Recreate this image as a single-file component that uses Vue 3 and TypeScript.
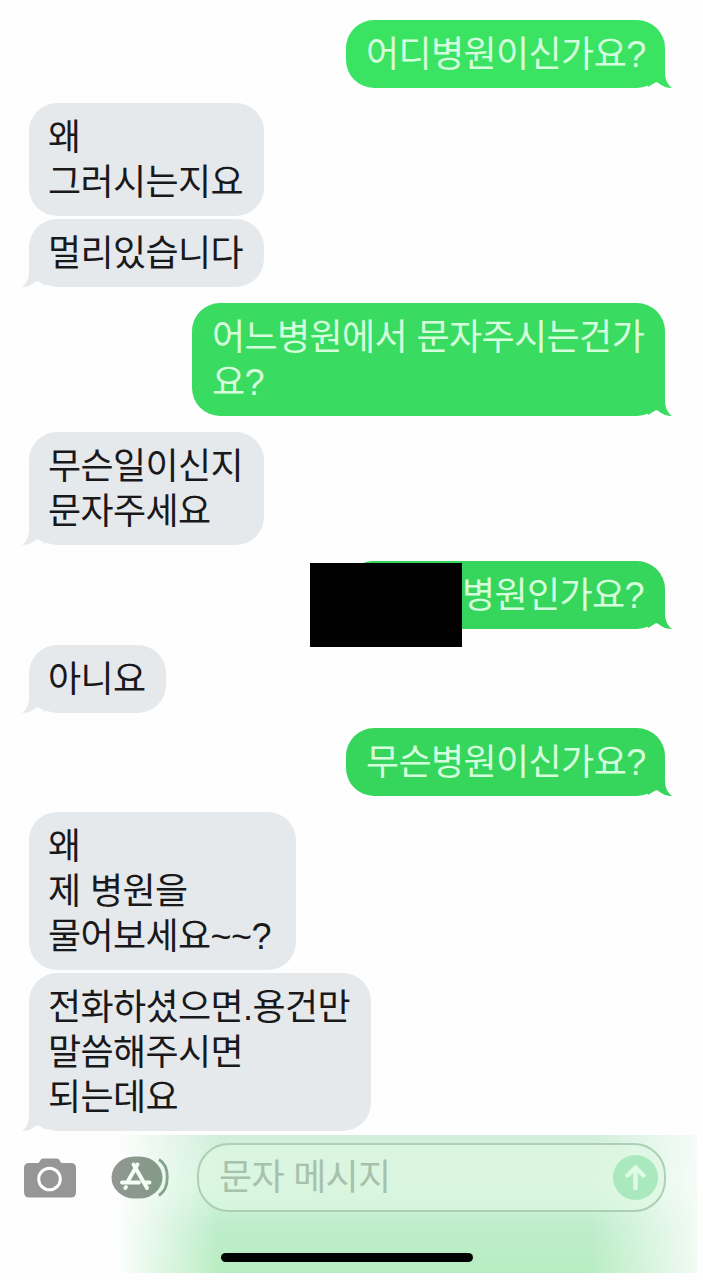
<script setup lang="ts">
interface Message {
  side: 'in' | 'out'
  lines: string[]
  width: number
  gap: number
  tail: boolean
  masked?: boolean
  tone?: string
}

const messages: Message[] = [
  { side: 'out', lines: ['어디병원이신가요?'], width: 319, gap: 0, tail: true, tone: 'bright' },
  { side: 'in', lines: ['왜', '그러시는지요'], width: 235, gap: 15, tail: false },
  { side: 'in', lines: ['멀리있습니다'], width: 235, gap: 3, tail: true },
  { side: 'out', lines: ['어느병원에서 문자주시는건가', '요?'], width: 473, gap: 16, tail: true, tone: 'mid' },
  { side: 'in', lines: ['무슨일이신지', '문자주세요'], width: 235, gap: 16, tail: true },
  { side: 'out', lines: ['병원인가요?'], width: 320, gap: 16, tail: true, masked: true },
  { side: 'in', lines: ['아니요'], width: 137, gap: 16, tail: true },
  { side: 'out', lines: ['무슨병원이신가요?'], width: 319, gap: 15, tail: true },
  { side: 'in', lines: ['왜', '제 병원을', '물어보세요~~?'], width: 267, gap: 16, tail: false },
  { side: 'in', lines: ['전화하셨으면.용건만', '말씀해주시면', '되는데요'], width: 342, gap: 3, tail: true },
]
</script>

<template>
  <main class="screen">
    <section class="thread">
      <div
        v-for="(m, i) in messages"
        :key="i"
        class="row"
        :class="m.side"
        :style="{ marginTop: m.gap + 'px' }"
      >
        <div class="bubble" :class="[m.tone, { masked: m.masked }]" :style="{ width: m.width + 'px' }">
          <p v-for="(line, n) in m.lines" :key="n" class="line">{{ line }}</p>
          <svg v-if="m.tail" class="tail" width="26" height="28" viewBox="0 0 26 28">
            <path d="M0 0H19V12C19 19 21 24 26 28C21 28 17 26.500 13 23.500Q10.500 21.500 8.500 23L2 27Z" />
          </svg>
          <span v-if="m.masked" class="mask"></span>
        </div>
      </div>
    </section>

    <footer class="composer">
      <div class="controls">
        <svg class="camera" width="52" height="40" viewBox="0 0 52 40">
          <path fill="#969696" d="M5 5H14C16 5 16 .5 19 .5H33C36 .5 36 5 38 5H47Q52 5 52 10V34Q52 39.500 47 39.500H5Q0 39.500 0 34V10Q0 5 5 5Z" />
          <circle cx="25.500" cy="21" r="10.800" fill="none" stroke="#fff" stroke-width="3" />
        </svg>
        <svg class="apps" width="59" height="44" viewBox="0 0 59 44">
          <defs>
            <linearGradient id="appFill">
              <stop offset="0" stop-color="#929693" />
              <stop offset="1" stop-color="#829b87" />
            </linearGradient>
          </defs>
          <rect x=".5" y=".5" width="51" height="42" rx="23" ry="21" fill="url(#appFill)" />
          <path d="M48 3.500C59 10 59 32 48 39.500" fill="none" stroke="#83a38a" stroke-width="2.800" />
          <g fill="none" stroke="#f4fff6" stroke-width="3.900" stroke-linecap="round">
            <path d="M26.500 8.500L17 25M22.500 8.500L36 32M11 26.500H28M35 26.500H38.500M15 31L14.300 32" />
          </g>
        </svg>
        <div class="field">
          <span class="placeholder">문자 메시지</span>
          <svg class="send" width="45" height="45" viewBox="0 0 45 45">
            <circle cx="22.500" cy="22.500" r="22.500" fill="#aae9bd" />
            <path d="M22.500 33V13M14.500 20.500L22.500 12.500L30.500 20.500" fill="none" stroke="#e0fbe5" stroke-width="4.500" stroke-linecap="round" stroke-linejoin="round" />
          </svg>
        </div>
      </div>
      <div class="home"></div>
    </footer>
  </main>
</template>

<style>
body {
  margin: 0;
  background: #fefefe;
}
</style>

<style scoped>
.screen {
  width: 703px;
  height: 1280px;
  box-sizing: border-box;
  padding-top: 20px;
  overflow: hidden;
  display: flex;
  flex-direction: column;
  background: #fefefe;
  font-family: "Liberation Sans", "Noto Sans CJK KR", sans-serif;
}
.thread {
  height: 1115px;
  flex: none;
}
.row {
  display: flex;
  padding: 0 38px 0 29px;
}
.row.out {
  justify-content: flex-end;
}
.bubble {
  position: relative;
  box-sizing: border-box;
  padding: 12px 19px 11px;
  border-radius: 28px;
  background: #e6e9ec;
  color: #19191c;
}
.out .bubble {
  padding-left: 20px;
  background: #36d65c;
  color: #d5ffdc;
}
.out .bubble.bright {
  background: #3be363;
}
.out .bubble.mid {
  background: #3adb61;
}
.line {
  margin: 0;
  height: 45px;
  line-height: 45px;
  font-size: 36px;
  letter-spacing: -0.6px;
  white-space: nowrap;
}
.out .bubble.masked {
  padding-right: 21px;
}
.masked .line {
  text-align: right;
}
.tail {
  position: absolute;
  right: -7px;
  bottom: 0;
  fill: #36d65c;
}
.bright .tail {
  fill: #3be363;
}
.mid .tail {
  fill: #3adb61;
}
.in .tail {
  right: auto;
  left: -7px;
  transform: scaleX(-1);
  fill: #e6e9ec;
}
.mask {
  position: absolute;
  left: -35px;
  top: 2px;
  width: 152px;
  height: 84px;
  background: #000;
}
.composer {
  width: 697px;
  height: 138px;
  flex: none;
  display: flex;
  flex-direction: column;
  align-items: center;
  background:
    linear-gradient(90deg, #fefefe 115px, #fefefe00 220px, #fefefe00 590px, #fefefed0 697px),
    linear-gradient(180deg, #d1eedb 0, #d3f4dc 35%, #bdedcb 68%, #b9edc1 100%);
}
.controls {
  align-self: stretch;
  display: flex;
  align-items: flex-start;
  padding: 8px 0 0 24px;
}
.camera {
  margin-top: 15px;
}
.apps {
  margin: 13px 0 0 35px;
}
.field {
  box-sizing: border-box;
  width: 469px;
  height: 69px;
  margin-left: 27px;
  padding: 0 6px 0 20px;
  border: 2px solid #acd0b4;
  border-radius: 32px;
  background: #def7e2a8;
  display: flex;
  align-items: center;
  justify-content: space-between;
}
.placeholder {
  font-size: 36px;
  line-height: 45px;
  letter-spacing: -0.7px;
  color: #a6c1ac;
}
.home {
  width: 252px;
  height: 9px;
  margin: 41px 0 0 -3px;
  border-radius: 5px;
  background: #020403;
}
</style>
